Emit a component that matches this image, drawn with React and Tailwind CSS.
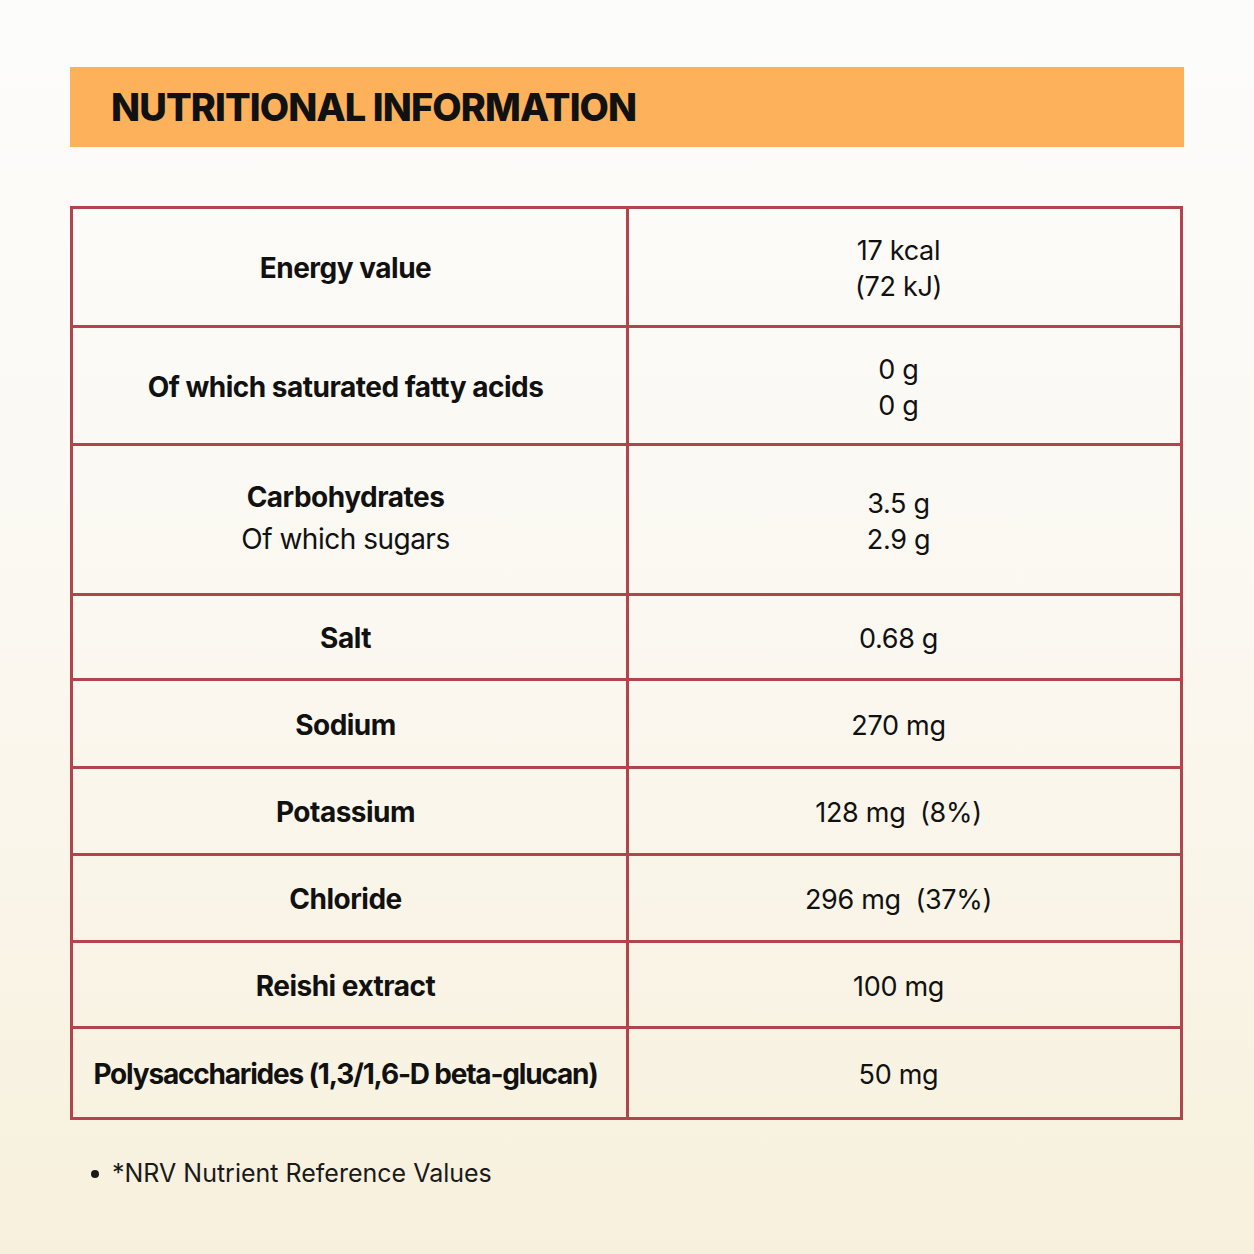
import React from "react";

const rows = [
  { h: "h-[116px]", label: <span className="font-bold">Energy value</span>, value: ["17 kcal", "(72 kJ)"] },
  { h: "h-[118px]", label: <span className="font-bold">Of which saturated fatty acids</span>, value: ["0 g", "0 g"] },
  {
    h: "h-[150px]",
    label: (
      <div className="flex flex-col items-center leading-[42px] pb-[6px]">
        <span className="font-bold">Carbohydrates</span>
        <span className="font-normal">Of which sugars</span>
      </div>
    ),
    value: ["3.5 g", "2.9 g"],
  },
  { h: "h-[85px]", label: <span className="font-bold">Salt</span>, value: ["0.68 g"] },
  { h: "h-[88px]", label: <span className="font-bold">Sodium</span>, value: ["270 mg"] },
  { h: "h-[87px]", label: <span className="font-bold">Potassium</span>, value: ["128 mg  (8%)"] },
  { h: "h-[87px]", label: <span className="font-bold">Chloride</span>, value: ["296 mg  (37%)"] },
  { h: "h-[86px]", label: <span className="font-bold">Reishi extract</span>, value: ["100 mg"] },
  {
    h: "h-[91px]",
    label: <span className="font-bold tracking-[-1.2px]">Polysaccharides (1,3/1,6-D beta-glucan)</span>,
    value: ["50 mg"],
  },
];

export default function App() {
  return (
    <div
      className="w-[1254px] h-[1254px] bg-gradient-to-b from-[#fcfcfb] via-[#fbf8f1] to-[#f7f0dc] text-[#111] pt-[67px] px-[70px]"
      style={{ fontFamily: "Inter, 'Open Sans', sans-serif" }}
    >
      <div className="h-[80px] bg-[#fdb15b] flex items-center pl-[41px]">
        <h1 className="text-[38px] font-extrabold tracking-[-0.9px] text-[#111]">NUTRITIONAL INFORMATION</h1>
      </div>

      <div className="mt-[59px] w-[1113px] border-[3px] border-[#b2454b]">
        {rows.map((r, i) => (
          <div
            key={i}
            className={`grid grid-cols-[556px_1fr] ${r.h} ${i > 0 ? "border-t-[3px] border-[#b2454b]" : ""}`}
          >
            <div className="flex items-center justify-center border-r-[3px] border-[#b2454b] text-[28px] tracking-[-0.5px] text-center pr-[8px] pt-[2px]">
              {r.label}
            </div>
            <div className="flex flex-col items-center justify-center text-[27px] leading-[36px] tracking-[-0.3px] whitespace-pre pr-[12px] pt-[4px]">
              {r.value.map((v, j) => (
                <span key={j}>{v}</span>
              ))}
            </div>
          </div>
        ))}
      </div>

      <div className="mt-[35px] flex items-center pl-[21px] text-[25px] text-[#1a1a1a]">
        <span className="w-[8px] h-[8px] rounded-full bg-[#1a1a1a] mr-[13px]"></span>
        <span>*NRV Nutrient Reference Values</span>
      </div>
    </div>
  );
}
